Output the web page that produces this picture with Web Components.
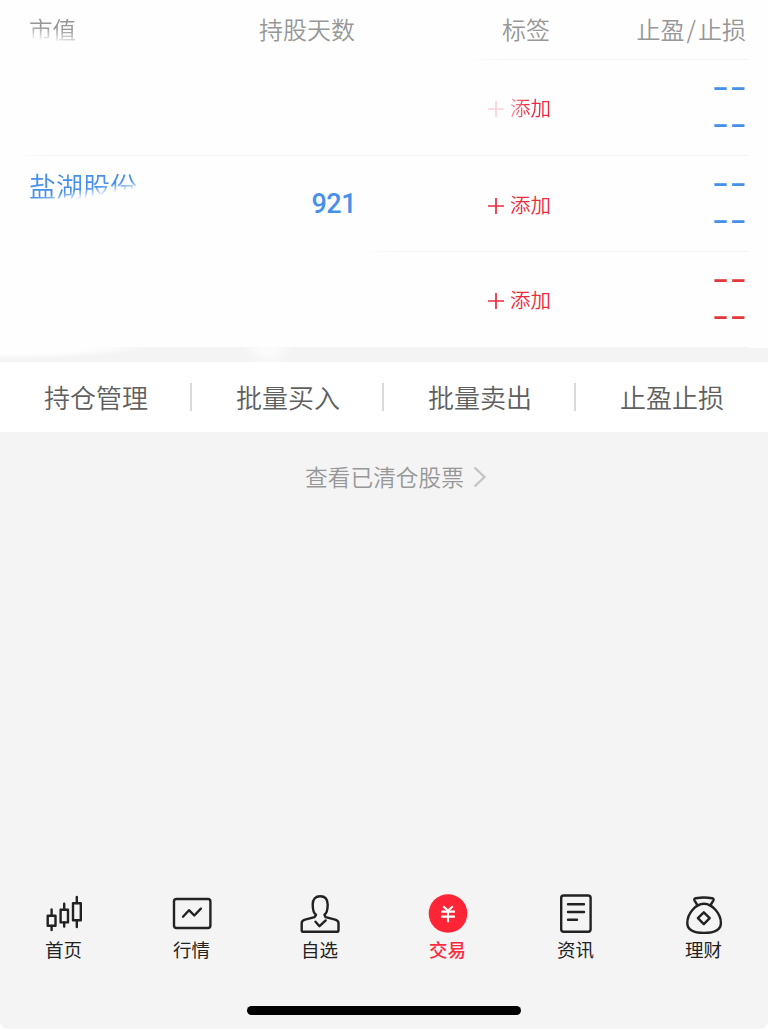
<!DOCTYPE html>
<html lang="zh-CN">
<head>
<meta charset="utf-8">
<meta name="viewport" content="width=device-width, initial-scale=1.0">
<title>持仓</title>
<style>
  html { background: #fff; }
  body {
    margin: 0;
    font-family: "Noto Sans CJK SC", sans-serif;
    font-weight: 350;
  }
</style>
</head>
<body>
<trade-page>
  <holding-table>
    <holding-row line="none"></holding-row>
    <holding-row name="盐湖股份" days="921" line="full"></holding-row>
    <holding-row tone="up" line="half"></holding-row>
  </holding-table>
  <action-bar>
    <span>持仓管理</span>
    <span>批量买入</span>
    <span>批量卖出</span>
    <span>止盈止损</span>
  </action-bar>
  <more-link>查看已清仓股票</more-link>
  <tab-bar slot="bottom">
    <tab-item icon="candles">首页</tab-item>
    <tab-item icon="quote">行情</tab-item>
    <tab-item icon="user">自选</tab-item>
    <tab-item icon="trade" active>交易</tab-item>
    <tab-item icon="news">资讯</tab-item>
    <tab-item icon="bag">理财</tab-item>
  </tab-bar>
</trade-page>

<script>
  function render(el, html) {
    el.attachShadow({ mode: 'open' }).innerHTML = html;
  }

  class TradePage extends HTMLElement {
    constructor() {
      super();
      render(this, `
        <style>
          :host {
            display: flex;
            flex-direction: column;
            height: 1029px;
            background: #f4f4f4;
            border-radius: 0 0 8px 8px;
            overflow: hidden;
          }
          main { flex: 1; }
          footer { padding-bottom: 14px; }
          .home {
            width: 274px;
            height: 9px;
            margin: 43px auto 0;
            border-radius: 5px;
            background: #000;
          }
        </style>
        <main><slot></slot></main>
        <footer><slot name="bottom"></slot><div class="home"></div></footer>
      `);
    }
  }

  class HoldingTable extends HTMLElement {
    constructor() {
      super();
      render(this, `
        <style>
          :host { display: block; }
          .head {
            display: grid;
            grid-template-columns: 170px 156px 195px 196px;
            height: 59px;
            box-sizing: border-box;
            padding-left: 29px;
            background: #fefefe;
            color: #979797;
            font-size: 24px;
            line-height: 58px;
            text-align: right;
          }
          .value {
            justify-self: start;
            font-size: 23.5px;
            -webkit-mask-image: linear-gradient(188deg, #000 48%, transparent 70%);
            mask-image: linear-gradient(188deg, #000 48%, transparent 70%);
          }
          i { font-style: normal; margin: 0 2px; }
          /* gap under the rows, whitened by soft smudges on the left */
          .gap {
            height: 15px;
            background:
              linear-gradient(#fefefe, #fefefe) no-repeat 748px 0 / 20px 1px,
              radial-gradient(ellipse 150px 12px at 0 0, #fefefe 60%, #fefefe00),
              radial-gradient(ellipse 26px 16px at 268px 2px, #fbfbfb 30%, #fbfbfb00),
              #f4f4f4;
          }
        </style>
        <div class="head">
          <span class="value">市值</span>
          <span>持股天数</span>
          <span>标签</span>
          <span>止盈<i>/</i>止损</span>
        </div>
        <slot></slot>
        <div class="gap"></div>
      `);
    }
  }

  class HoldingRow extends HTMLElement {
    constructor() {
      super();
      const name = this.getAttribute('name') || '';
      const days = this.getAttribute('days') || '';
      render(this, `
        <style>
          :host {
            --tone: #4790ea;
            --from: 28px;
            display: grid;
            grid-template-columns: 170px 157px 195px 196px;
            height: 96px;
            box-sizing: border-box;
            padding-left: 29px;
            /* hairline on the top edge */
            background:
              linear-gradient(90deg, transparent, #f4f4f4 40px) no-repeat var(--from) 0 / calc(748px - var(--from)) 1px,
              #fefefe;
            color: var(--tone);
          }
          :host([tone="up"]) { --tone: #e5383c; }
          :host([line="none"]) { --from: 464px; }
          :host([line="full"]) { --from: 10px; }
          :host([line="half"]) { --from: 360px; }
          .name {
            justify-self: start;
            padding-top: 5px;
            height: 52px;
            font-size: 27px;
            line-height: 52px;
            -webkit-mask-image: linear-gradient(170deg, #000 57%, transparent 70%);
            mask-image: linear-gradient(170deg, #000 57%, transparent 70%);
          }
          .days {
            font: 500 27px/98px Roboto, sans-serif;
            letter-spacing: -.5px;
            text-align: right;
          }
          .add {
            display: flex;
            align-items: center;
            justify-content: flex-end;
            gap: 6px;
            padding-top: 3px;
            color: #ee2a3f;
            font-size: 20.5px;
          }
          .add span { line-height: 30px; margin-top: -4px; }
          :host([line="none"]) .add {
            -webkit-mask-image: linear-gradient(90deg, #0003 148px, #0008 156px, #000 172px);
            mask-image: linear-gradient(90deg, #0003 148px, #0008 156px, #000 172px);
          }
          .limit {
            display: flex;
            flex-direction: column;
            align-items: flex-end;
            padding-top: 10px;
            font: 500 30px/36.5px Inter, sans-serif;
            transform: scaleX(1.27);
            transform-origin: right;
          }
        </style>
        <span class="name">${name}</span>
        <span class="days">${days}</span>
        <span class="add">
          <svg width="16" height="16" viewBox="0 0 16 16" stroke="currentColor" stroke-width="1.7"><path d="M0 8h16M8 0v16"/></svg>
          <span>添加</span>
        </span>
        <span class="limit"><span>--</span><span>--</span></span>
      `);
    }
  }

  class ActionBar extends HTMLElement {
    constructor() {
      super();
      render(this, `
        <style>
          :host {
            display: flex;
            align-items: center;
            height: 70px;
            background: #fff;
            color: #606060;
            font-size: 26px;
          }
          ::slotted(span) {
            flex: 1;
            line-height: 28px;
            height: 28px;
            padding-left: 2px;
            text-align: center;
            box-sizing: border-box;
            border-right: 2px solid #dadada;
          }
          ::slotted(span:last-child) { border-color: transparent; }
        </style>
        <slot></slot>
      `);
    }
  }

  class MoreLink extends HTMLElement {
    constructor() {
      super();
      render(this, `
        <style>
          :host {
            display: flex;
            align-items: center;
            justify-content: center;
            gap: 9px;
            height: 90px;
            padding-left: 23px;
            color: #979797;
            font-size: 22.7px;
          }
          span { margin-top: -2px; }
        </style>
        <span><slot></slot></span>
        <svg width="13" height="22" viewBox="0 0 13 22" fill="none" stroke="#c4c4c4" stroke-width="2.4"><path d="M1.5 1.5l10 9.5-10 9.5"/></svg>
      `);
    }
  }

  class TabBar extends HTMLElement {
    constructor() {
      super();
      render(this, `
        <style>
          :host { display: flex; }
          ::slotted(*) { flex: 1; }
        </style>
        <slot></slot>
      `);
    }
  }

  const icons = {
    candles: `
      <rect x="5.7" y="23.7" width="7.8" height="10"/>
      <path d="M9.6 17.5v6M9.6 34v4M22.2 11.8v6M22.2 30.5v4M34.8 5v6M34.8 28.5v6.5"/>
      <rect x="18.6" y="17.8" width="7.4" height="12.6"/>
      <rect x="31" y="11.2" width="7.8" height="17"/>`,
    quote: `
      <rect x="4" y="7" width="36.4" height="29" rx="2.5"/>
      <path d="M13 24.7l6-6.5 5.3 5.3 6.6-6.8"/>`,
    user: `
      <path d="M18 22.8C15.3 21 14.7 18.7 14.7 12.5 14.7 7 17.7 4.2 22.2 4.2s7.5 2.8 7.5 8.3c0 6.2-.6 8.5-3.3 10.3l1.2 2.3 9.6 2.5c2.3.6 3.3 1.5 3.3 3.5v7.1c0 1-.6 1.6-1.6 1.6H5.3c-1 0-1.6-.6-1.6-1.6v-7.1c0-2 1-2.9 3.3-3.5l9.6-2.5z"/>
      <path d="M17.5 29.7l4 4.5 6.2-5.8"/>`,
    trade: `
      <circle cx="22" cy="21.5" r="19.3" fill="#ff2536" stroke="none"/>
      <path stroke="#fff" stroke-width="2.1" stroke-linecap="butt" d="M17.2 14.2l4.8 4.6 4.8-4.6M15.2 19.6h13.7M15.2 24.6h13.7M22 19v11.3"/>`,
    news: `
      <rect x="7.2" y="3.5" width="29.4" height="36.3" rx="2.5"/>
      <path d="M14 12.3h16M14 20h16M14 27.7h9"/>`,
    bag: `
      <path d="M15.3 13.5c-.9-2.7-2.2-3.8-2.8-5-.6-1.3 0-2 1.3-2.3 5.3-1 11-1 16.3 0 1.3.3 1.9 1 1.3 2.3-.6 1.2-1.9 2.3-2.8 5"/>
      <path d="M22 11.8c-8 0-16.7 9.5-16.7 19.2 0 7 5.4 9.9 16.7 9.9s16.9-2.9 16.9-9.9C38.9 21.3 30 11.8 22 11.8z"/>
      <path d="M21.8 20.3l5.9 5.9-5.9 5.9-5.9-5.9z"/>`
  };

  class TabItem extends HTMLElement {
    constructor() {
      super();
      render(this, `
        <style>
          :host {
            display: flex;
            flex-direction: column;
            align-items: center;
            color: #222;
            font-size: 18.5px;
            font-weight: 400;
          }
          :host([active]) { color: #ff2a3c; font-weight: 500; }
          span {
            height: 27px;
            line-height: 27px;
            padding-right: 1px;
          }
        </style>
        <svg width="44" height="44" viewBox="0 0 44 44" fill="none" stroke="currentColor" stroke-width="2.4" stroke-linecap="round" stroke-linejoin="round">${icons[this.getAttribute('icon')]}</svg>
        <span><slot></slot></span>
      `);
    }
  }

  customElements.define('trade-page', TradePage);
  customElements.define('holding-table', HoldingTable);
  customElements.define('holding-row', HoldingRow);
  customElements.define('action-bar', ActionBar);
  customElements.define('more-link', MoreLink);
  customElements.define('tab-bar', TabBar);
  customElements.define('tab-item', TabItem);
</script>
</body>
</html>
